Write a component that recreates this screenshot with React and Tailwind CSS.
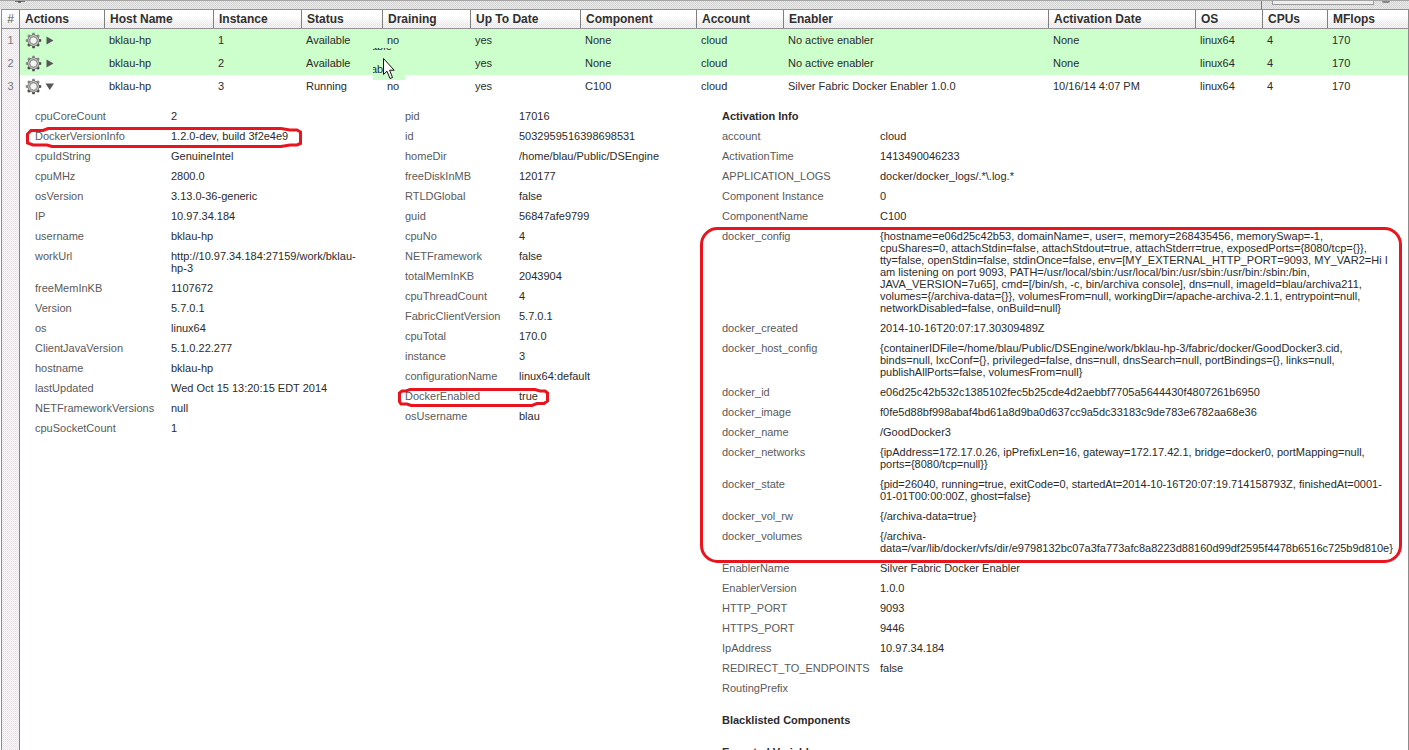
import React from "react";

const dither =
  "bg-[#faf8fa] bg-[conic-gradient(#e2e0e4_25%,transparent_0_50%,#eae6ea_0_75%,transparent_0)] bg-[size:2px_2px]";

const headers = [
  "Actions", "Host Name", "Instance", "Status", "Draining", "Up To Date", "Component",
  "Account", "Enabler", "Activation Date", "OS", "CPUs", "MFlops",
];

const rows = [
  { cells: ["bklau-hp", "1", "Available", "no", "yes", "None", "cloud", "No active enabler", "None", "linux64", "4", "170"] },
  { cells: ["bklau-hp", "2", "Available", "", "yes", "None", "cloud", "No active enabler", "None", "linux64", "4", "170"] },
  { open: true, cells: ["bklau-hp", "3", "Running", "no", "yes", "C100", "cloud", "Silver Fabric Docker Enabler 1.0.0", "10/16/14 4:07 PM", "linux64", "4", "170"] },
];

const machine = [
  ["cpuCoreCount", "2"],
  ["DockerVersionInfo", "1.2.0-dev, build 3f2e4e9"],
  ["cpuIdString", "GenuineIntel"],
  ["cpuMHz", "2800.0"],
  ["osVersion", "3.13.0-36-generic"],
  ["IP", "10.97.34.184"],
  ["username", "bklau-hp"],
  ["workUrl", "http://10.97.34.184:27159/work/bklau-", "hp-3"],
  ["freeMemInKB", "1107672"],
  ["Version", "5.7.0.1"],
  ["os", "linux64"],
  ["ClientJavaVersion", "5.1.0.22.277"],
  ["hostname", "bklau-hp"],
  ["lastUpdated", "Wed Oct 15 13:20:15 EDT 2014"],
  ["NETFrameworkVersions", "null"],
  ["cpuSocketCount", "1"],
];

const engine = [
  ["pid", "17016"],
  ["id", "5032959516398698531"],
  ["homeDir", "/home/blau/Public/DSEngine"],
  ["freeDiskInMB", "120177"],
  ["RTLDGlobal", "false"],
  ["guid", "56847afe9799"],
  ["cpuNo", "4"],
  ["NETFramework", "false"],
  ["totalMemInKB", "2043904"],
  ["cpuThreadCount", "4"],
  ["FabricClientVersion", "5.7.0.1"],
  ["cpuTotal", "170.0"],
  ["instance", "3"],
  ["configurationName", "linux64:default"],
  ["DockerEnabled", "true"],
  ["osUsername", "blau"],
];

const activation = [
  ["account", "cloud"],
  ["ActivationTime", "1413490046233"],
  ["APPLICATION_LOGS", "docker/docker_logs/.*\\.log.*"],
  ["Component Instance", "0"],
  ["ComponentName", "C100"],
  [
    "docker_config",
    "{hostname=e06d25c42b53, domainName=, user=, memory=268435456, memorySwap=-1,",
    "cpuShares=0, attachStdin=false, attachStdout=true, attachStderr=true, exposedPorts={8080/tcp={}},",
    "tty=false, openStdin=false, stdinOnce=false, env=[MY_EXTERNAL_HTTP_PORT=9093, MY_VAR2=Hi I",
    "am listening on port 9093, PATH=/usr/local/sbin:/usr/local/bin:/usr/sbin:/usr/bin:/sbin:/bin,",
    "JAVA_VERSION=7u65], cmd=[/bin/sh, -c, bin/archiva console], dns=null, imageId=blau/archiva211,",
    "volumes={/archiva-data={}}, volumesFrom=null, workingDir=/apache-archiva-2.1.1, entrypoint=null,",
    "networkDisabled=false, onBuild=null}",
  ],
  ["docker_created", "2014-10-16T20:07:17.30309489Z"],
  [
    "docker_host_config",
    "{containerIDFile=/home/blau/Public/DSEngine/work/bklau-hp-3/fabric/docker/GoodDocker3.cid,",
    "binds=null, lxcConf={}, privileged=false, dns=null, dnsSearch=null, portBindings={}, links=null,",
    "publishAllPorts=false, volumesFrom=null}",
  ],
  ["docker_id", "e06d25c42b532c1385102fec5b25cde4d2aebbf7705a5644430f4807261b6950"],
  ["docker_image", "f0fe5d88bf998abaf4bd61a8d9ba0d637cc9a5dc33183c9de783e6782aa68e36"],
  ["docker_name", "/GoodDocker3"],
  [
    "docker_networks",
    "{ipAddress=172.17.0.26, ipPrefixLen=16, gateway=172.17.42.1, bridge=docker0, portMapping=null,",
    "ports={8080/tcp=null}}",
  ],
  [
    "docker_state",
    "{pid=26040, running=true, exitCode=0, startedAt=2014-10-16T20:07:19.714158793Z, finishedAt=0001-",
    "01-01T00:00:00Z, ghost=false}",
  ],
  ["docker_vol_rw", "{/archiva-data=true}"],
  ["docker_volumes", "{/archiva-", "data=/var/lib/docker/vfs/dir/e9798132bc07a3fa773afc8a8223d88160d99df2595f4478b6516c725b9d810e}"],
  ["EnablerName", "Silver Fabric Docker Enabler"],
  ["EnablerVersion", "1.0.0"],
  ["HTTP_PORT", "9093"],
  ["HTTPS_PORT", "9446"],
  ["IpAddress", "10.97.34.184"],
  ["REDIRECT_TO_ENDPOINTS", "false"],
  ["RoutingPrefix", ""],
];

function Gear() {
  return (
    <svg width="17" height="17" viewBox="-8.5 -8.5 17 17" className="shrink-0">
      {[0, 45, 90, 135, 180, 225, 270, 315].map((a) => (
        <path
          key={a}
          d="M-1.6 -5 L-1.2 -7.7 H1.2 L1.6 -5 Z"
          transform={`rotate(${a})`}
          fill={a > 80 && a < 240 ? "#4a4a4a" : "#8a8a8a"}
        />
      ))}
      <circle r="4.9" fill="none" stroke="#666666" strokeWidth="2.2" />
      <circle r="4.7" fill="none" stroke="#c6c6c6" strokeWidth="1.4" />
      <circle r="3.6" fill="#f1f6f1" stroke="#7d7d7d" strokeWidth="0.8" />
    </svg>
  );
}

function Arrow({ open }) {
  return (
    <svg width="9" height="9" viewBox="0 0 9 9" className="shrink-0">
      <path d={open ? "M0.5 1.5 H9 L4.75 8 Z" : "M1.5 0.5 L8.5 4.5 L1.5 8.5 Z"} fill="#575757" />
    </svg>
  );
}

function Properties({ items, labelWidth }) {
  return items.map(([name, ...lines]) => (
    <div key={name} className="flex py-1">
      <div className={`${labelWidth} shrink-0 text-[#5a5a5a]`}>{name}</div>
      <div className="min-h-3">
        {lines.map((line, i) => (
          <div key={i}>{line}</div>
        ))}
      </div>
    </div>
  ));
}

export default function App() {
  return (
    <div className="relative flex h-[750px] w-[1409px] flex-col overflow-hidden bg-white font-['Liberation_Sans',Arial,sans-serif] text-[11px] leading-3 whitespace-nowrap text-[#2b2b2b]">
      <div className="flex h-[9px] shrink-0 border-t border-[#a4a4a4] bg-[#e8e8e8] bg-[conic-gradient(#d0d0d4_25%,transparent_0_50%,#d9d9d9_0_75%,transparent_0)] bg-[size:2px_2px]">
        <svg width="1261" height="8" className="shrink-0">
          <path d="M15 0 H25 M18 1 H21" stroke="#555" strokeWidth="1.5" />
        </svg>
        <div className="h-full w-px bg-[#777]" />
        <div className="ml-[10px] h-1 w-[102px] border border-t-0 border-[#999] bg-[#eee]" />
        <div className="ml-2 h-[2px] w-2 rounded-b-full bg-[#888]" />
      </div>

      <div className="ml-px flex min-h-0 w-[1408px] grow flex-col border-x border-[#8c8c8c]">
        <div className={`${dither} h-5 shrink-0 border-y border-[#929292]`}>
          <div className="grid h-full grid-cols-[18px_85px_109px_88px_81px_88px_110px_116px_87px_265px_147px_67px_65px_80px] bg-[linear-gradient(#ffffff_35%,#ffffff00_80%)] text-[12px] leading-[18px]">
            <div className="border-r border-[#808080] text-center text-[#555]">#</div>
            {headers.map((h) => (
              <div key={h} className="border-r border-[#808080] pl-[5px] font-bold text-[#303030] last:border-r-0">
                {h}
              </div>
            ))}
          </div>
        </div>

        <div className="flex min-h-0 grow">
          <div className={`${dither} w-[18px] shrink-0 border-r border-[#808080] text-center text-[#777]`}>
            <div className="h-[23px] leading-[23px]">1</div>
            <div className="h-[23px] leading-[23px]">2</div>
            <div className="h-[23px] leading-[23px]">3</div>
          </div>
          <div className="min-w-0 grow">
            {rows.map((row) => (
              <div
                key={row.cells[1]}
                className={`grid h-[23px] grid-cols-[84px_109px_88px_81px_88px_110px_116px_87px_265px_147px_67px_65px_81px] leading-[23px] ${row.open ? "bg-white" : "bg-[#ccffcc]"}`}
              >
                <div className="flex items-center gap-[3px] pl-[5px]">
                  <Gear />
                  <Arrow open={row.open} />
                </div>
                {row.cells.map((c, i) => (
                  <div key={i} className="pl-[5px]">{c}</div>
                ))}
              </div>
            ))}

            <div className="flex pt-2 pl-[15px]">
              <div className="w-[370px] shrink-0">
                <Properties items={machine} labelWidth="w-[136px]" />
              </div>
              <div className="w-[317px] shrink-0">
                <Properties items={engine} labelWidth="w-[114px]" />
              </div>
              <div>
                <div className="py-1 font-bold">Activation Info</div>
                <Properties items={activation} labelWidth="w-[158px]" />
                <div className="pt-4 pb-1 font-bold">Blacklisted Components</div>
                <div className="pt-4 pb-1 font-bold">Exported Variables</div>
              </div>
            </div>
          </div>
        </div>
      </div>

      {/* Repaint remnants under the pointer */}
      <div className="absolute top-[48px] left-[373px] h-[2px] w-8 overflow-hidden bg-[#ccffcc]">
        <div className="-mt-[8px] -ml-[2px]">able</div>
      </div>
      <div className="absolute top-[62px] left-[373px] h-[18px] w-8 overflow-hidden bg-[#ccffcc]">
        <div className="-ml-[2px] pt-px">able</div>
        <div className="absolute top-0 right-0 h-full w-[19px] bg-[#ccffcc]" />
      </div>
      <svg className="absolute top-[57px] left-[382px]" width="14" height="24" viewBox="0 0 14 24">
        <path
          d="M1.5 1.5 V17.5 L5 14.2 L8 21.5 L10.5 20.5 L7.6 13.2 H12.2 Z"
          fill="white"
          stroke="#111"
          strokeWidth="1"
        />
      </svg>

      {/* Highlight marks */}
      <svg className="pointer-events-none absolute inset-0" width="1409" height="750" fill="none" stroke="#e8151f" strokeWidth="3">
        <path d="M48 128.5 H281 L290 130 H297 L300.5 132 V143.5 L297 145 H290 L281 146.5 H52 L47 145 H33 L27.5 143 V134 L31 130.5 H43 Z" />
        <path d="M410 389.5 H535 L540 391 H545 L547.5 393 V401 L544 403.5 H537 L532 405.5 H411 L407 404 H401 L399.5 401.5 V393 L402 391 H406 Z" />
        <rect x="701.5" y="228.5" width="699" height="333" rx="16" />
      </svg>
    </div>
  );
}
